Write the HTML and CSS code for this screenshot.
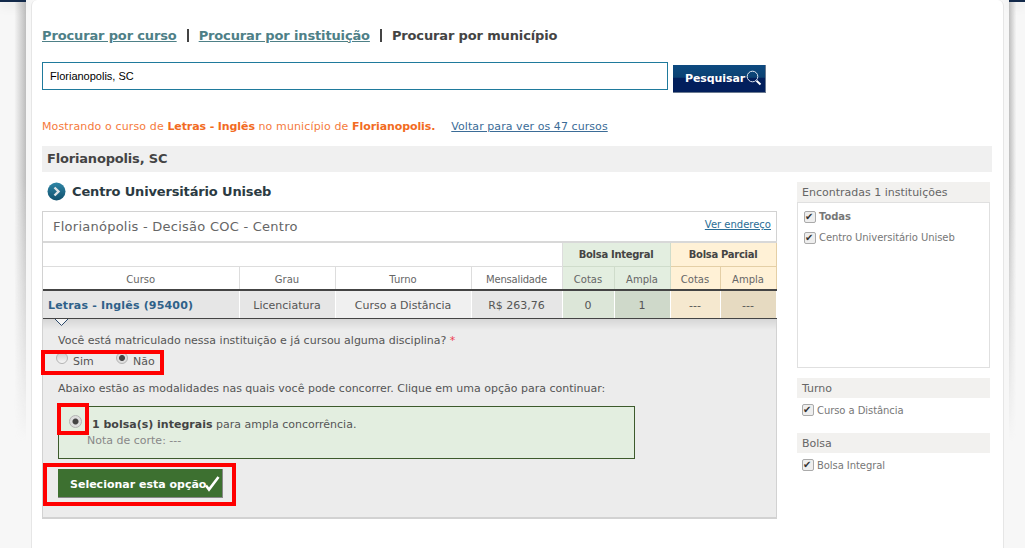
FILE: index.html
```html
<!DOCTYPE html>
<html lang="pt">
<head>
<meta charset="utf-8">
<title>Procurar por município</title>
<link rel="stylesheet" href="styles.css">
</head>
<body>
<div class="topstrip left"></div>
<div class="topstrip right"></div>
<main class="card">
  <nav class="tabs">
    <a href="#" class="tab-link">Procurar por curso</a><span class="tab-sep"></span>
    <a href="#" class="tab-link">Procurar por instituição</a><span class="tab-sep"></span>
    <span class="tab-current">Procurar por município</span>
  </nav>
  <form class="search">
    <input class="search-input" type="text" value="Florianopolis, SC">
    <button class="search-btn" type="button">Pesquisar<svg width="16" height="16" viewBox="0 0 16 16"><circle cx="6.5" cy="6.5" r="5.3" fill="none" stroke="#dfe6f2" stroke-width="1"/><path d="M10.5 10.8l4 3.6" stroke="#fff" stroke-width="2"/></svg></button>
  </form>
  <p class="status">Mostrando o curso de <b>Letras - Inglês</b> no município de <b>Florianopolis.</b><a href="#" class="back">Voltar para ver os 47 cursos</a></p>
  <h2 class="city">Florianopolis, SC</h2>
  <div class="columns">
    <section class="results">
      <h3 class="inst"><svg width="19" height="19" viewBox="0 0 19 19"><defs><linearGradient id="g" x1="0" y1="0" x2="0" y2="1"><stop offset="0" stop-color="#2f86a6"/><stop offset="1" stop-color="#11506d"/></linearGradient></defs><circle cx="9.5" cy="9.5" r="9" fill="url(#g)"/><path d="M7.5 5.5l4 4-4 4" fill="none" stroke="#dfe3e6" stroke-width="2.4"/></svg>Centro Universitário Uniseb</h3>
      <div class="panel">
        <div class="panel-head"><span class="campus">Florianópolis - Decisão COC - Centro</span><a href="#" class="addr">Ver endereço</a></div>
        <table class="grid">
          <colgroup><col class="c1"><col class="c2"><col class="c3"><col class="c4"><col class="c5"><col class="c6"><col class="c7"><col class="c8"></colgroup>
          <tr class="r1"><th colspan="4" class="blank"></th><th colspan="2" class="gi gt">Bolsa Integral</th><th colspan="2" class="pa gt">Bolsa Parcial</th></tr>
          <tr class="r2"><th>Curso</th><th>Grau</th><th>Turno</th><th class="men">Mensalidade</th><th class="gi">Cotas</th><th class="gi">Ampla</th><th class="pa">Cotas</th><th class="pa">Ampla</th></tr>
          <tr class="r3"><td class="course d1"><a href="#">Letras - Inglês (95400)</a></td><td class="d2">Licenciatura</td><td class="d3">Curso a Distância</td><td class="d2">R$ 263,76</td><td class="gi1">0</td><td class="gi2">1</td><td class="pa1">---</td><td class="pa2">---</td></tr>
        </table>
        <div class="detail">
          <svg class="caret" width="15" height="8" viewBox="0 0 15 8"><path d="M1 0l6.500 6.500L14 0" fill="#f4f4f4" stroke="#2c4a6b"/></svg>
          <p class="q">Você está matriculado nessa instituição e já cursou alguma disciplina? <span class="req">*</span></p>
          <div class="radios">
            <label class="radio"><span class="rb"></span>Sim</label>
            <label class="radio"><span class="rb on"></span>Não</label>
          </div>
          <p class="q2">Abaixo estão as modalidades nas quais você pode concorrer. Clique em uma opção para continuar:</p>
          <div class="option">
            <span class="rb on big"></span>
            <div class="opt-text">
              <p class="opt-main"><b>1 bolsa(s) integrais</b> para ampla concorrência.</p>
              <p class="opt-note">Nota de corte: ---</p>
            </div>
          </div>
          <button class="select-btn" type="button">Selecionar esta opção<svg width="17" height="18" viewBox="0 0 17 18"><path d="M2 11.500l3 4L14.500 3" fill="none" stroke="#fff" stroke-width="2.600"/></svg></button>
        </div>
      </div>
    </section>
    <aside class="side">
      <h4 class="side-h">Encontradas 1 instituições</h4>
      <div class="side-box">
        <label class="check strong"><span class="cb"></span>Todas</label>
        <label class="check"><span class="cb"></span>Centro Universitário Uniseb</label>
      </div>
      <h4 class="side-h s2">Turno</h4>
      <label class="check tight"><span class="cb"></span>Curso a Distância</label>
      <h4 class="side-h s3">Bolsa</h4>
      <label class="check tight"><span class="cb"></span>Bolsa Integral</label>
    </aside>
  </div>
</main>
<div class="mark m1"></div>
<div class="mark m2"></div>
<div class="mark m3"></div>
</body>
</html>
```
FILE: styles.css
```css
* { box-sizing: border-box; }
html, body { margin: 0; height: 548px; overflow: hidden; }
body {
  position: relative;
  font-family: "DejaVu Sans", Verdana, sans-serif;
  font-size: 11px;
  color: #555;
  background: #f7f7f7;
}
body::before, body::after {
  content: ""; position: absolute; top: 2px; height: 440px;
  -webkit-mask-image: linear-gradient(#000 0, #000 40%, transparent 100%);
  mask-image: linear-gradient(#000 0, #000 40%, transparent 100%);
}
body::before { left: 0; width: 26px; background: linear-gradient(90deg, transparent 0, transparent 55%, #bdbdbd 100%); }
body::after { right: 0; width: 16px; background: linear-gradient(90deg, #bdbdbd 0, transparent 45%); }
.topstrip { position: absolute; top: 0; height: 2px; background: #12294a; box-shadow: 0 2px 12px rgba(0,0,0,.22); }
.topstrip.left { left: 0; width: 26px; }
.topstrip.right { right: 0; width: 16px; }
.card {
  position: relative;
  z-index: 2;
  width: 973px;
  height: 560px;
  margin: 0 0 0 31px;
  padding: 25px 11px 0 10px;
  background: #fff;
  border: 1px solid #e6e6e6;
  border-top: 0;
  border-radius: 6px;
}
.tabs { display: flex; align-items: center; height: 20px; font-size: 13px; font-weight: 700; letter-spacing: -.14px; color: #444; }
.tab-link { color: #4e8087; }
.tab-sep { width: 2px; height: 13px; margin: 0 10px; background: #444; }
.search { display: flex; align-items: flex-start; margin-top: 17px; }
.search-input {
  width: 626px; height: 28px; padding: 0 7px;
  border: 1px solid #1f7a9c; outline: 0; background: #fff;
  font: 11px "Liberation Sans", Arial, sans-serif; color: #000;
}
.search-btn {
  display: flex; align-items: center; justify-content: flex-start;
  width: 93px; height: 28px; margin: 3px 0 0 5px; padding: 0 0 0 12px;
  border: 0; border-right: 1px solid #6b7a90; border-bottom: 1px solid #6b7a90;
  background: linear-gradient(#0d4a80 0, #0b4273 45%, #021f5c 50%, #021f5c 100%);
  color: #fff; font: 700 11px "DejaVu Sans", Verdana, sans-serif; letter-spacing: -.1px;
}
.search-btn svg { margin: -2px 0 0 1px; }
.status { margin: 25px 0 0; height: 28px; line-height: 17px; color: #f57a3c; font-size: 11px; letter-spacing: .13px; }
.status b { color: #f26b22; letter-spacing: -.1px; }
.back { margin-left: 16px; color: #3b6c97; letter-spacing: .07px; }
.city { height: 26px; margin: 0; padding: 0 0 0 5px; background: #f0f0f0; font-size: 13px; line-height: 25px; letter-spacing: -.18px; color: #444; }
.columns { display: flex; align-items: flex-start; margin-top: 9px; }
.results { width: 735px; }
.inst { display: flex; align-items: center; gap: 6px; height: 20px; margin: 0 0 0 5px; font-size: 13px; letter-spacing: -.15px; color: #2b3a42; }
.panel { width: 735px; margin-top: 10px; border: 1px solid #d2d2d2; border-bottom-width: 2px; }
.panel-head { display: flex; justify-content: space-between; align-items: center; height: 29px; padding: 0 5px 0 10px; }
.campus { font-size: 13px; letter-spacing: .25px; color: #666; }
.addr { color: #2a6d96; font-size: 10px; margin-top: -4px; }
.grid { width: 733px; border-collapse: collapse; table-layout: fixed; border-top: 2px solid #d8d8d8; font-size: 10px; }
.c1 { width: 196px; } .c2 { width: 96px; } .c3 { width: 136px; } .c4 { width: 91px; }
.c5 { width: 52px; } .c6 { width: 56px; } .c7 { width: 50px; } .c8 { width: 56px; }
.grid th { font-weight: 400; text-align: center; padding: 0; border: 1px solid #ddd; border-width: 0 1px 1px 0; color: #666; }
.r1 th { height: 24px; }
.r2 th { height: 24px; border-bottom: 0; padding-top: 3px; }
.grid .gt { font-weight: 700; letter-spacing: -.3px; color: #444; }
.grid .men { letter-spacing: -.2px; }
.grid .gi { background: #e3eee0; border-color: #cfdccb; }
.grid .pa { background: #fff1d6; border-color: #e4cfa6; }
.r3 td { height: 28px; padding: 2px 0 0; text-align: center; font-size: 11px; color: #555; border-top: 2px solid #444; border-bottom: 1px solid #444; border-right: 1px solid #fff; }
.r3 .course { text-align: left; padding-left: 5px; font-weight: 700; letter-spacing: .18px; }
.course a { color: #2f6189; text-decoration: none; }
.d1, .r3 .d2 { background: #e6e6e6; }
.d3 { background: #f0f0f0; }
.gi1 { background: #dce6d8; } .gi2 { background: #cfd9ca; }
.pa1 { background: #f5e8cf; } .pa2 { background: #e6dac1; }
.detail { position: relative; height: 198px; padding: 15px 15px 0; background: linear-gradient(#d6d6d6 0, #ececec 11px); }
.caret { position: absolute; left: 11px; top: 0; }
.q, .q2 { margin: 0; line-height: 13px; color: #555; }
.req { color: #ef3b4e; }
.radios { display: flex; height: 20px; margin: 3px 0 0 -2px; }
.radio { display: flex; align-items: center; width: 60px; gap: 5px; line-height: 15px; padding-top: 3px; }
.rb { display: block; width: 12px; height: 12px; margin-top: -7px; border-radius: 50%; border: 1px solid #b4b4b4; background: linear-gradient(#cfcfcf, #f6f6f6); }
.rb.on { background: radial-gradient(circle, #444 0 2.5px, #dedede 3.5px); }
.q2 { margin-top: 12px; }
.option { position: relative; display: flex; width: 577px; height: 53px; margin-top: 11px; border: 1px solid #3d5a2c; background: #e3eee0; }
.rb.big { position: absolute; left: 10px; top: 8px; width: 13px; height: 13px; margin: 0; }
.opt-text { padding: 10px 0 0 33px; }
.opt-main { margin: 0; line-height: 15px; }
.opt-main b { color: #444; }
.opt-note { margin: 2px 0 0 -5px; line-height: 14px; color: #888; }
.select-btn {
  display: flex; align-items: center; width: 165px; height: 29px; margin-top: 10px; padding: 3px 0 0 12px;
  border: 0; border-right: 1px solid #888; border-bottom: 1px solid #888;
  background: #3d7030; color: #fff; font: 700 11px "DejaVu Sans", Verdana, sans-serif; white-space: nowrap;
}
.select-btn svg { margin: -2px 0 0 -2px; }
.side { width: 193px; margin-left: 20px; margin-top: 1px; }
.side-h { height: 20px; margin: 0; padding-left: 5px; background: #f2f1ef; font-weight: 400; font-size: 11px; line-height: 22px; color: #666; }
.side-box { height: 166px; padding: 3px 6px; border: 1px solid #e0e0e0; }
.check { display: flex; align-items: center; gap: 3px; height: 21px; font-size: 10px; letter-spacing: -.07px; color: #777; }
.check.strong { font-weight: 700; }
.cb { position: relative; width: 12px; height: 12px; border: 1px solid #aaa; border-radius: 2px; background: #eee; }
.cb::after { content: "✔"; position: absolute; left: 0; top: -2px; font-size: 10px; line-height: 13px; color: #333; }
.check.tight { margin-left: 5px; height: 24px; }
.s2 { margin-top: 10px; }
.s3 { margin-top: 11px; }
.mark { position: absolute; z-index: 3; border: 4px solid #f00; }
.m1 { left: 41px; top: 350px; width: 123px; height: 25px; }
.m2 { left: 57px; top: 403px; width: 32px; height: 32px; }
.m3 { left: 43px; top: 463px; width: 193px; height: 43px; }
```
